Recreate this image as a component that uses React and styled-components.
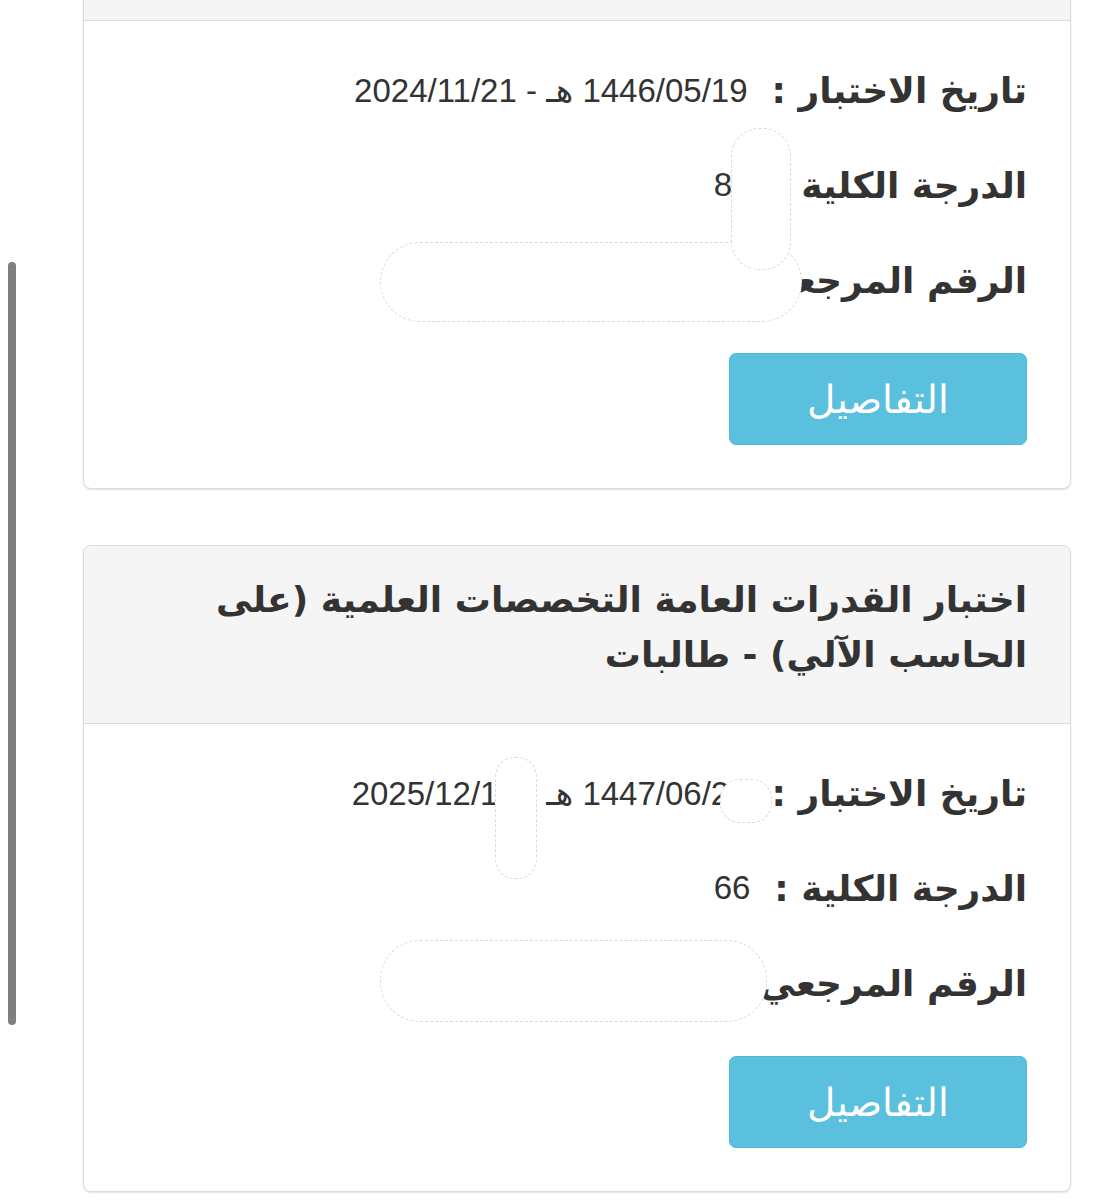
import React from "react";
import styled, { createGlobalStyle } from "styled-components";

const Global = createGlobalStyle`
  html, body { margin: 0; padding: 0; background: #fff; }
  body { font-family: "Liberation Sans", "DejaVu Sans", sans-serif; color: #333; }
`;

const Page = styled.div`
  position: relative;
  width: 1110px;
  height: 1200px;
  overflow: hidden;
  padding: 0 39px 0 83px;
  box-sizing: border-box;
  display: flex;
  flex-direction: column;
  gap: 56px;
`;

const Scrollbar = styled.div`
  position: absolute;
  left: 8px;
  top: 262px;
  width: 8px;
  height: 763px;
  border-radius: 4px;
  background: #7f7f7f;
`;

const Card = styled.div`
  direction: rtl;
  border: 1px solid #dcdcdc;
  border-radius: 8px;
  background: #fff;
  box-shadow: 0 1px 2px rgba(0, 0, 0, 0.12);
  margin-top: ${(p) => (p.$cut ? "-30px" : "0")};
  overflow: hidden;
`;

const Header = styled.div`
  background: #f5f5f5;
  border-bottom: 1px solid #dcdcdc;
  padding: ${(p) => (p.$empty ? "0" : "26px 43px 41px")};
  height: ${(p) => (p.$empty ? "49px" : "auto")};
`;

const Title = styled.h3`
  margin: 0;
  font-family: "DejaVu Sans", sans-serif;
  font-weight: bold;
  font-size: 36px;
  line-height: 55px;
  color: #333;
  text-align: right;
`;

const Body = styled.div`
  position: relative;
  padding: 44px 43px 43px;
  display: flex;
  flex-direction: column;
  align-items: flex-start;
`;

const Rows = styled.div`
  display: flex;
  flex-direction: column;
  gap: 45px;
  width: 100%;
`;

const Row = styled.div`
  display: flex;
  align-items: center;
  gap: 24px;
  height: 50px;
`;

const Label = styled.span`
  font-family: "DejaVu Sans", sans-serif;
  font-weight: bold;
  font-size: 36px;
  color: #333;
  white-space: nowrap;
`;

const Value = styled.span`
  font-family: "Liberation Sans", "DejaVu Sans", sans-serif;
  font-size: 33px;
  color: #333;
  white-space: nowrap;
`;

const Button = styled.button`
  margin-top: 48px;
  width: 298px;
  height: 92px;
  border: 1px solid #4cb9da;
  border-radius: 7px;
  background: #5bc0de;
  color: #fff;
  font-family: "DejaVu Sans", sans-serif;
  font-size: 39px;
  font-weight: 300;
  cursor: pointer;
`;

const Blot = styled.div`
  position: absolute;
  background: #fff;
  border: 1px dashed #dadada;
  border-radius: ${(p) => p.$r || "30px"};
`;

function InfoCard({ cut, title, date, total, blots }) {
  return (
    <Card $cut={cut}>
      <Header $empty={!title}>{title && <Title>{title}</Title>}</Header>
      <Body>
        <Rows>
          <Row>
            <Label>تاريخ الاختبار :</Label>
            <Value dir="rtl">{date}</Value>
          </Row>
          <Row>
            <Label>الدرجة الكلية :</Label>
            <Value>{total}</Value>
          </Row>
          <Row>
            <Label>الرقم المرجعي :</Label>
            <Value>1234567890</Value>
          </Row>
        </Rows>
        <Button>التفاصيل</Button>
        {blots.map((b, i) => (
          <Blot
            key={i}
            $r={b.r}
            style={{ left: b.x, top: b.y, width: b.w, height: b.h }}
          />
        ))}
      </Body>
    </Card>
  );
}

export default function App() {
  return (
    <>
      <Global />
      <Page>
        <InfoCard
          cut
          date="1446/05/19 هـ - 2024/11/21"
          total="80"
          blots={[
            { x: 296, y: 221, w: 420, h: 78, r: "40px" },
            { x: 647, y: 107, w: 58, h: 140, r: "28px" },
          ]}
        />
        <InfoCard
          title="اختبار القدرات العامة التخصصات العلمية (على الحاسب الآلي) - طالبات"
          date="1447/06/25 هـ - 2025/12/16"
          total="66"
          blots={[
            { x: 296, y: 216, w: 385, h: 80, r: "40px" },
            { x: 411, y: 33, w: 40, h: 120, r: "20px" },
            { x: 636, y: 55, w: 50, h: 42, r: "20px" },
          ]}
        />
        <Scrollbar />
      </Page>
    </>
  );
}
